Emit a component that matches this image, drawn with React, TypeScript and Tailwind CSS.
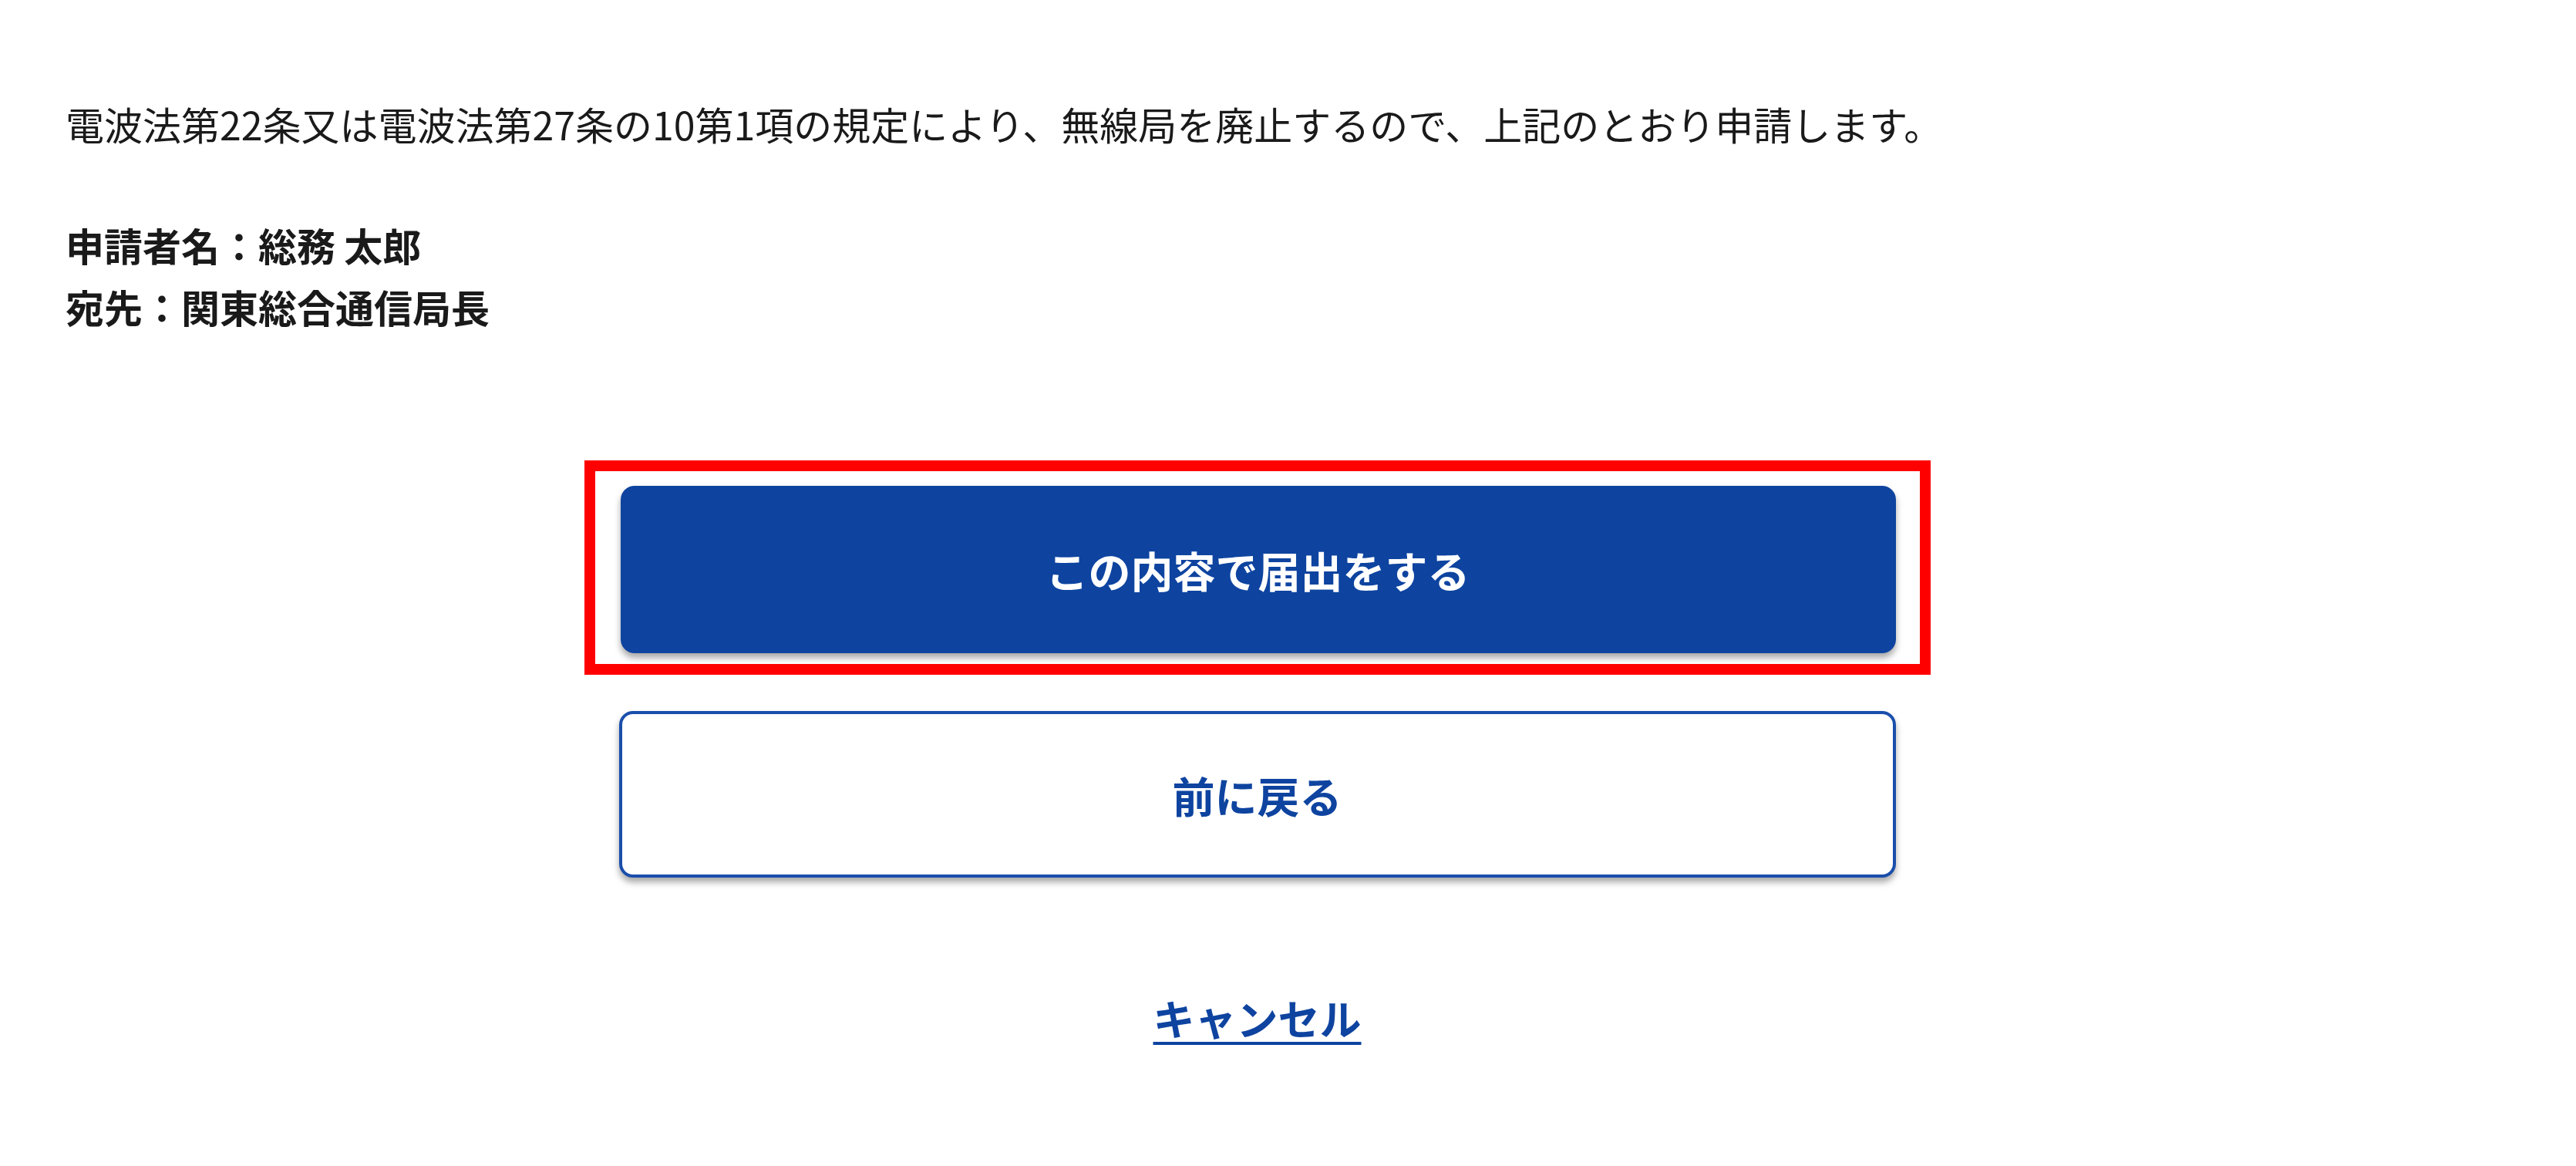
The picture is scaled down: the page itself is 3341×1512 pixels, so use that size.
export default function App() {
  return (
    <div
      className="min-h-[1512px] w-full bg-white text-[#1a1a1a]"
      style={{ fontFamily: '"Noto Sans CJK JP", "Noto Sans", sans-serif' }}
    >
      <div className="pl-[85px] pr-[165px] pt-[120px]">
        <p className="text-[50px] leading-[80px]">
          電波法第22条又は電波法第27条の10第1項の規定により、無線局を廃止するので、上記のとおり申請します。
        </p>
        <div className="mt-[77px] text-[50px] font-bold leading-[80px]">
          <p>申請者名：総務 太郎</p>
          <p>宛先：関東総合通信局長</p>
        </div>
        <div className="mt-[160px] flex flex-col items-center">
          <div className="border-[14px] border-[#ff0000] pt-[19px] pb-[14px] pl-[33px] pr-[31px]">
            <button className="flex h-[217px] w-[1654px] items-center justify-center rounded-[18px] bg-[#0e44a0] text-[55px] font-bold text-white shadow-[0_6px_8px_rgba(0,0,0,0.35)]">
              この内容で届出をする
            </button>
          </div>
          <button className="mt-[47px] flex h-[216px] w-[1656px] items-center justify-center rounded-[18px] border-[4px] border-[#1a4eab] bg-white text-[55px] font-bold text-[#0e44a0] shadow-[0_6px_8px_rgba(0,0,0,0.35)]">
            前に戻る
          </button>
          <a
            href="#"
            className="mt-[141px] text-[54px] font-bold leading-[81px] text-[#0e44a0] underline decoration-[4px] underline-offset-[8px]"
          >
            キャンセル
          </a>
        </div>
      </div>
    </div>
  );
}
